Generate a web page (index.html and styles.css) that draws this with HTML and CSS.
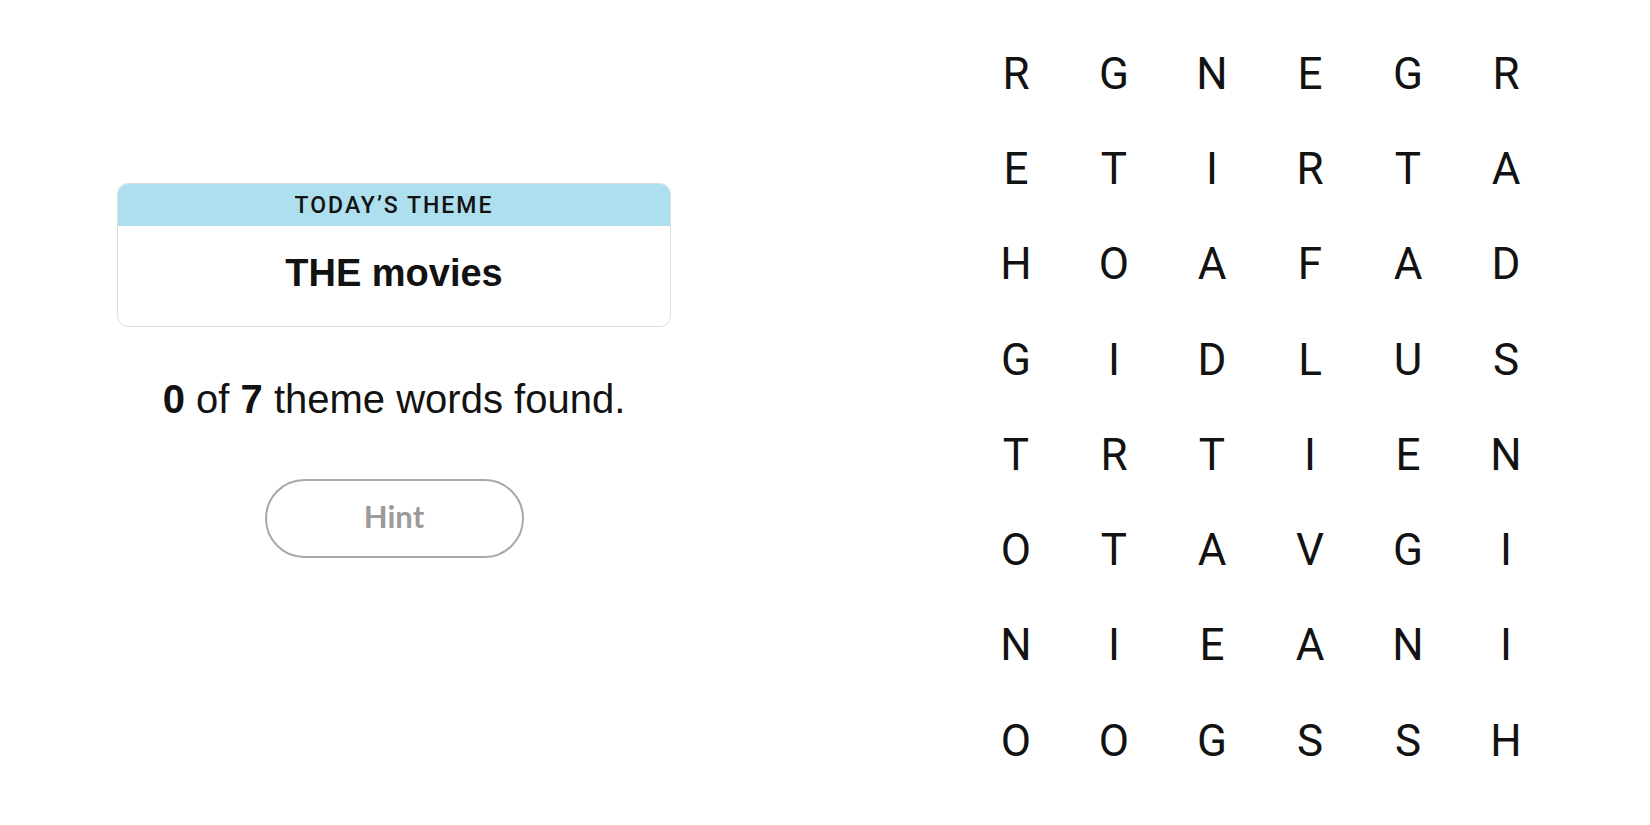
FILE: index.html
```html
<!DOCTYPE html>
<html>
<head>
<meta charset="utf-8">
<link rel="stylesheet" href="styles.css">
</head>
<body>
<main class="game">
  <section class="side">
    <div class="theme-card">
      <div class="theme-head">TODAY’S THEME</div>
      <div class="theme-body">THE movies</div>
    </div>
    <p class="progress"><b>0</b> of <b>7</b> theme words found.</p>
    <button class="hint">Hint</button>
  </section>
  <section class="board">
    <span>R</span><span>G</span><span>N</span><span>E</span><span>G</span><span>R</span>
    <span>E</span><span>T</span><span>I</span><span>R</span><span>T</span><span>A</span>
    <span>H</span><span>O</span><span>A</span><span>F</span><span>A</span><span>D</span>
    <span>G</span><span>I</span><span>D</span><span>L</span><span>U</span><span>S</span>
    <span>T</span><span>R</span><span>T</span><span>I</span><span>E</span><span>N</span>
    <span>O</span><span>T</span><span>A</span><span>V</span><span>G</span><span>I</span>
    <span>N</span><span>I</span><span>E</span><span>A</span><span>N</span><span>I</span>
    <span>O</span><span>O</span><span>G</span><span>S</span><span>S</span><span>H</span>
  </section>
</main>
</body>
</html>
```
FILE: styles.css
```css
html, body {
  margin: 0;
  padding: 0;
  background: #ffffff;
}
body {
  font-family: "Liberation Sans", Arial, sans-serif;
  color: #121212;
  width: 1650px;
  height: 825px;
  overflow: hidden;
}
.game {
  display: flex;
  align-items: flex-start;
}
.side {
  width: 554px;
  margin-left: 117px;
  padding-top: 183px;
  display: flex;
  flex-direction: column;
  align-items: center;
}
.theme-card {
  width: 554px;
  box-sizing: border-box;
  border: 1px solid #dcdcdc;
  border-radius: 11px;
  overflow: hidden;
}
.theme-head {
  height: 42px;
  background: #aedfee;
  display: flex;
  align-items: center;
  justify-content: center;
  font-family: Roboto, "Liberation Sans", sans-serif;
  font-weight: 500;
  font-size: 23px;
  letter-spacing: 2px;
  color: #121212;
}
.theme-body {
  height: 94px;
  padding-bottom: 6px;
  display: flex;
  align-items: center;
  justify-content: center;
  font-weight: bold;
  font-size: 38px;
}
.progress {
  margin: 48px 0 0;
  font-size: 40px;
  line-height: 48px;
  text-align: center;
}
.hint {
  margin-top: 56px;
  width: 259px;
  height: 79px;
  border: 2px solid #a8a8a8;
  border-radius: 40px;
  background: #ffffff;
  color: #9b9b9b;
  font-family: Lato, "Liberation Sans", sans-serif;
  font-weight: bold;
  font-size: 31px;
  padding: 0 0 5px;
}
.board {
  margin-left: 296px;
  margin-top: 26px;
  display: grid;
  grid-template-columns: repeat(6, 98px);
  grid-auto-rows: 95.3px;
  font-family: Roboto, "Liberation Sans", sans-serif;
  font-size: 44px;
}
.board span {
  display: flex;
  align-items: center;
  justify-content: center;
}
```
